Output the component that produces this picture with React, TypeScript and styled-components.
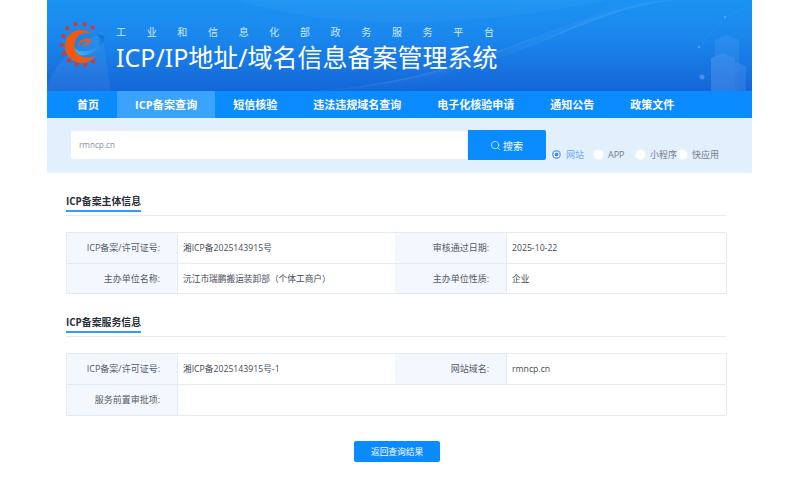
import React from "react";
import styled, { createGlobalStyle } from "styled-components";
import { Search } from "lucide-react";

const GlobalStyle = createGlobalStyle`
  html, body {
    margin: 0;
    padding: 0;
    background: #fff;
    font-family: "Open Sans", "Noto Sans CJK SC", sans-serif;
  }
`;

const Page = styled.div`
  width: 705px;
  margin-left: 47px;
`;

const Header = styled.header`
  position: relative;
  height: 91px;
  overflow: hidden;
  display: flex;
  gap: 6px;
  padding-left: 3px;
  box-sizing: border-box;
  background: linear-gradient(180deg, #1b93f3 0%, #1a85ec 45%, #1566d8 100%);
`;

const Backdrop = styled.svg`
  position: absolute;
  inset: 0;
`;

const LogoMark = styled.svg`
  position: relative;
  flex: none;
  margin-top: 15px;
`;

const Titles = styled.div`
  position: relative;
  display: flex;
  flex-direction: column;
  gap: 1px;
  padding-top: 25px;
  color: #fff;
`;

const Subtitle = styled.div`
  display: flex;
  justify-content: space-between;
  width: 378px;
  font-size: 10px;
  line-height: 14px;
  color: #d5e8fb;
`;

const Title = styled.h1`
  margin: 0;
  font-size: 25px;
  line-height: 34px;
  font-weight: 400;
  white-space: nowrap;
  font-family: "Noto Sans", "Noto Sans CJK SC", sans-serif;
`;

const Nav = styled.nav`
  display: flex;
  height: 27px;
  padding-left: 12px;
  background: #0a8bff;
`;

const NavItem = styled.a<{ $active?: boolean }>`
  padding: 0 18px;
  font-size: 11px;
  font-weight: 700;
  line-height: 27px;
  letter-spacing: ${(p) => (p.$active ? "0.1px" : "0")};
  color: #fff;
  white-space: nowrap;
  background: ${(p) => (p.$active ? "#3aa3fb" : "transparent")};
`;

const SearchBand = styled.div`
  display: flex;
  height: 55px;
  box-sizing: border-box;
  padding: 12px 0 0 23px;
  background: #e2effd;
`;

const SearchInput = styled.div`
  width: 398px;
  height: 30px;
  box-sizing: border-box;
  padding-left: 8px;
  font-size: 8.2px;
  line-height: 28px;
  color: #8a8f99;
  background: #fff;
  border: 1px solid #e8eef6;
  border-radius: 2px 0 0 2px;
`;

const SearchButton = styled.button`
  display: flex;
  align-items: center;
  justify-content: center;
  gap: 2px;
  width: 78px;
  height: 30px;
  padding: 0 1px 0 0;
  border: 0;
  border-radius: 0 2px 2px 0;
  font-family: inherit;
  font-size: 10px;
  color: #fff;
  background: #0a8bff;
`;

const RadioGroup = styled.div`
  display: flex;
  align-items: center;
  height: 13px;
  margin: 18px 0 0 6px;
`;

const RadioOption = styled.label`
  display: flex;
  align-items: center;
  gap: 5px;
  width: 42px;
  font-size: 9px;
  white-space: nowrap;
`;

const RadioText = styled.span<{ $on?: boolean }>`
  color: ${(p) => (p.$on ? "#6ea8f5" : "#777c85")};
`;

const RadioDot = styled.span<{ $on?: boolean }>`
  flex: none;
  width: 9px;
  height: 9px;
  border-radius: 50%;
  background: ${(p) =>
    p.$on
      ? "radial-gradient(circle, #3a8ff0 0 1.8px, #fff 2.2px 2.8px, #6ea8f5 3.2px)"
      : "#fff"};
  box-shadow: 0 0 0 1px #f0f6fe;
`;

const Main = styled.main`
  padding: 20px 25px 0 19px;
`;

const Section = styled.section`
  & + & {
    margin-top: 20px;
  }
`;

const SectionHead = styled.div`
  display: flex;
  align-items: flex-start;
  height: 22px;
  border-bottom: 1px solid #e3ebf5;
  margin-bottom: 16px;
`;

const SectionTitle = styled.h2`
  height: 17px;
  margin: 0;
  font-size: 9.9px;
  line-height: 16px;
  font-weight: 700;
  color: #2a2f38;
  border-bottom: 2px solid #2f9cff;
`;

const InfoTable = styled.div<{ $rows: string }>`
  display: grid;
  grid-template-columns: 111px 217px 112px 1fr;
  grid-template-rows: ${(p) => p.$rows};
  border: 1px solid #e7ebf1;
  border-bottom: 0;
`;

const Label = styled.div`
  padding-right: 17px;
  font-size: 9px;
  line-height: 30px;
  text-align: right;
  color: #555b66;
  background: #f3f8fe;
  border-bottom: 1px solid #e3ebf5;
  border-right: 1px solid #e3ebf5;
`;

const Value = styled.div<{ $span?: number }>`
  grid-column: span ${(p) => p.$span ?? 1};
  padding-left: 5px;
  font-size: 8.7px;
  line-height: 30px;
  color: #444a54;
  background: #fff;
  border-bottom: 1px solid #e3ebf5;
`;

const Actions = styled.div`
  display: flex;
  justify-content: center;
  padding: 25px 0 0 1px;
`;

const BackButton = styled.button`
  width: 86px;
  height: 21px;
  padding: 0;
  border: 0;
  border-radius: 2px;
  font-family: inherit;
  font-size: 8.7px;
  color: #fff;
  background: #0a8bff;
`;

const navItems = ["首页", "ICP备案查询", "短信核验", "违法违规域名查询", "电子化核验申请", "通知公告", "政策文件"];

const radios = [{ text: "网站", on: true }, { text: "APP" }, { text: "小程序" }, { text: "快应用" }];

// coordinates are 3x, taken from a crop of the logo
const teeth = [
  [52, 40], [76, 28], [104, 28], [128, 37], [40, 63], [35, 90],
  [41, 116], [57, 137], [80, 148], [106, 150], [130, 140],
];

function Logo() {
  return (
    <LogoMark width="60" height="70" viewBox="0 0 180 210">
      <defs>
        <linearGradient id="swoosh" x1="0" y1="1" x2="1" y2="0">
          <stop offset="0" stopColor="#3db6f6" />
          <stop offset="1" stopColor="#0f6fd4" />
        </linearGradient>
      </defs>
      {teeth.map(([x, y]) => (
        <rect key={`${x}-${y}`} x={x - 5.5} y={y - 5.5} width="11" height="11" rx="1" fill="#d63a26" />
      ))}
      <path
        d="M135 122C122 140 105 146 88 143C60 138 42 115 45 88C48 60 72 42 98 45C110 46 120 50 127 56C112 50 95 53 85 63C73 74 70 95 78 110C88 128 115 132 135 122Z"
        fill="#f15a0e"
      />
      <path
        d="M74 100C85 112 115 112 135 98C150 88 152 70 140 58C160 55 170 68 160 85C148 108 110 125 90 120C80 117 75 108 74 100Z"
        fill="url(#swoosh)"
      />
      <path
        d="M82 97C84 78 103 66 118 71C125 75 122 84 112 89C106 92 98 94 92 93C100 91 112 85 112 79C103 75 90 84 82 97Z"
        fill="#f15a0e"
      />
    </LogoMark>
  );
}

function HeaderBackdrop() {
  const lines = Array.from({ length: 16 }, (_, i) => i);
  return (
    <Backdrop width="705" height="91" viewBox="0 0 705 91">
      <path d="M0 85C10 60 30 45 55 32L64 91H0z" fill="#fff" opacity="0.06" />
      <path d="M190 0C280 30 420 30 560 0z" fill="#fff" opacity="0.03" />
      {lines.map((i) => (
        <path
          key={i}
          d={`M${270 + i * 6} 91C${400 + i * 6} ${80 - i * 3} ${500 + i * 4} ${50 - i * 3} ${570 + i * 4} 0`}
          fill="none"
          stroke="#fff"
          strokeWidth="0.5"
          opacity="0.05"
        />
      ))}
      <g fill="#9fd0fb" opacity="0.2">
        <path d="M668 40l12-5 12 5v51h-24z" opacity="0.5" />
        <path d="M664 58l12-5 12 5v33h-24z" />
        <path d="M679 66l10-4 10 4v25h-20z" opacity="0.7" />
      </g>
      <g fill="#bfe0fd" opacity="0.3">
        <circle cx="678" cy="17" r="1.2" />
        <circle cx="652" cy="47" r="1.2" />
        <circle cx="655" cy="77" r="2.5" />
      </g>
      <path d="M652 47L678 17 705 5" fill="none" stroke="#bfe0fd" strokeWidth="0.5" opacity="0.12" />
    </Backdrop>
  );
}

export default function App() {
  return (
    <>
      <GlobalStyle />
      <Page>
        <Header>
          <HeaderBackdrop />
          <Logo />
          <Titles>
            <Subtitle>
              {"工业和信息化部政务服务平台".split("").map((c, i) => (
                <span key={i}>{c}</span>
              ))}
            </Subtitle>
            <Title>ICP/IP地址/域名信息备案管理系统</Title>
          </Titles>
        </Header>
        <Nav>
          {navItems.map((item) => (
            <NavItem key={item} $active={item === "ICP备案查询"}>
              {item}
            </NavItem>
          ))}
        </Nav>
        <SearchBand>
          <SearchInput>rmncp.cn</SearchInput>
          <SearchButton>
            <Search size={11} strokeWidth={1.5} />
            搜索
          </SearchButton>
          <RadioGroup>
            {radios.map((r) => (
              <RadioOption key={r.text}>
                <RadioDot $on={r.on} />
                <RadioText $on={r.on}>{r.text}</RadioText>
              </RadioOption>
            ))}
          </RadioGroup>
        </SearchBand>
        <Main>
          <Section>
            <SectionHead>
              <SectionTitle>ICP备案主体信息</SectionTitle>
            </SectionHead>
            <InfoTable $rows="31px 30px">
              <Label>ICP备案/许可证号:</Label>
              <Value>湘ICP备2025143915号</Value>
              <Label>审核通过日期:</Label>
              <Value>2025-10-22</Value>
              <Label>主办单位名称:</Label>
              <Value>沅江市瑞鹏搬运装卸部（个体工商户）</Value>
              <Label>主办单位性质:</Label>
              <Value>企业</Value>
            </InfoTable>
          </Section>
          <Section>
            <SectionHead>
              <SectionTitle>ICP备案服务信息</SectionTitle>
            </SectionHead>
            <InfoTable $rows="31px 31px">
              <Label>ICP备案/许可证号:</Label>
              <Value>湘ICP备2025143915号-1</Value>
              <Label>网站域名:</Label>
              <Value>rmncp.cn</Value>
              <Label>服务前置审批项:</Label>
              <Value $span={3} />
            </InfoTable>
          </Section>
          <Actions>
            <BackButton>返回查询结果</BackButton>
          </Actions>
        </Main>
      </Page>
    </>
  );
}
